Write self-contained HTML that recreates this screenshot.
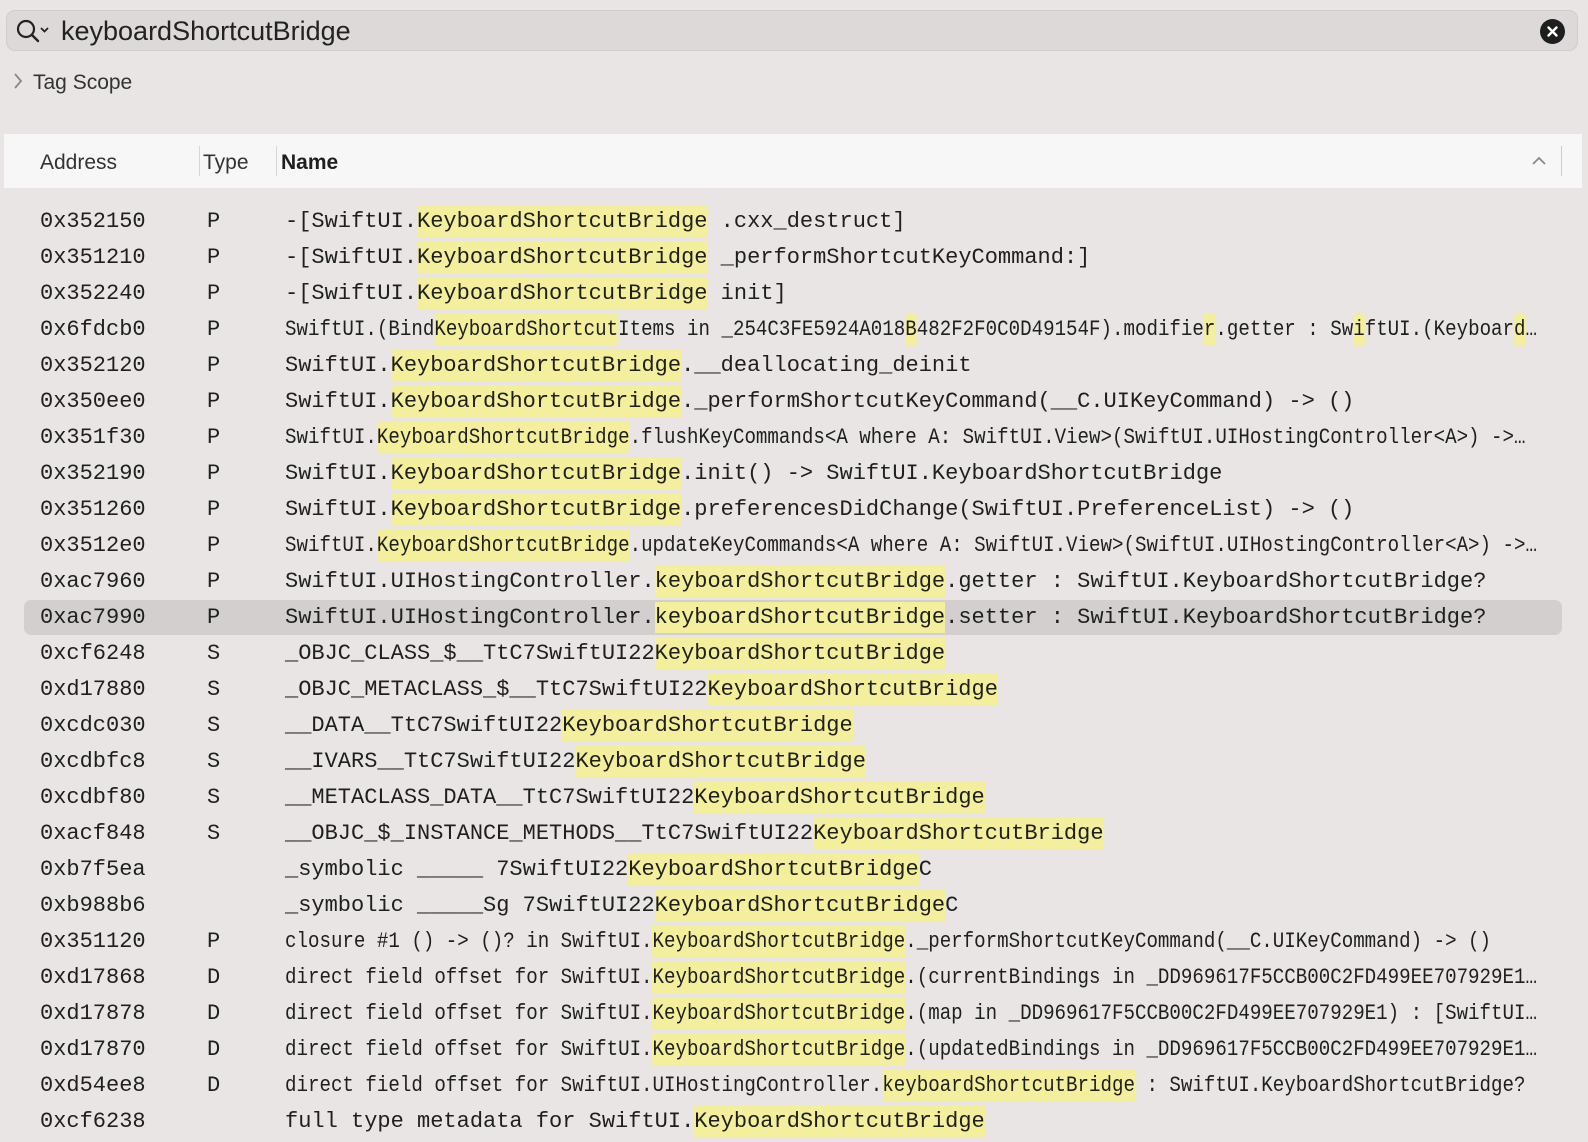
<!DOCTYPE html>
<html><head><meta charset="utf-8"><style>
*{margin:0;padding:0;box-sizing:border-box}
body{width:1588px;height:1142px;background:#e8e5e4;position:relative;overflow:hidden;font-family:"Liberation Sans",sans-serif;color:#1f1f1f}
.search{position:absolute;left:6px;top:10px;width:1572px;height:41px;background:#dcd9d8;border:1px solid #d0cdcc;border-radius:9px}
.search .q{position:absolute;left:54px;top:5px;font-size:27px;color:#222}
.close{position:absolute;left:1540px;top:19px;width:25px;height:25px;border-radius:50%;background:#1e1e1e}
.tag{position:absolute;left:33px;top:71px;font-size:21px;color:#333}
.hdr{position:absolute;left:4px;top:134px;width:1578px;height:54px;background:#f7f7f7}
.hdr span{position:absolute;top:17px;font-size:21px;color:#333}
.div{position:absolute;top:12px;width:1px;height:30px;background:#d6d6d6}
.row{position:absolute;left:0;width:1588px;height:36px;line-height:36px;font-family:"Liberation Mono",monospace;font-size:22px;white-space:nowrap}
.row .a{position:absolute;left:40px}
.row .t{position:absolute;left:207px}
.row .n{position:absolute;left:285px;transform-origin:0 50%}
.n.c{transform:scaleX(0.87)}
b{font-weight:normal;background:#f4ef9c;padding:3px 0}
.sel{position:absolute;left:24px;top:600px;width:1538px;height:35px;background:#d2cfce;border-radius:7px}
</style></head><body>
<div class="search">
<svg style="position:absolute;left:8px;top:7px" width="40" height="26" viewBox="0 0 40 26"><circle cx="11" cy="11" r="8" fill="none" stroke="#222" stroke-width="2.2"/><line x1="17" y1="17" x2="23" y2="23" stroke="#222" stroke-width="2.4" stroke-linecap="round"/><polyline points="26,10 29.5,13.5 33,10" fill="none" stroke="#222" stroke-width="1.8"/></svg>
<div class="q">keyboardShortcutBridge</div>
</div>
<div class="close"><svg width="25" height="25" viewBox="0 0 25 25"><path d="M8.5 8.5L16.5 16.5M16.5 8.5L8.5 16.5" stroke="#fff" stroke-width="2.4" stroke-linecap="round"/></svg></div>
<svg style="position:absolute;left:12px;top:72px" width="12" height="18" viewBox="0 0 12 18"><polyline points="3,2 9,9 3,16" fill="none" stroke="#888" stroke-width="1.8"/></svg>
<div class="tag">Tag Scope</div>
<div class="hdr">
<span style="left:36px">Address</span>
<div class="div" style="left:195px"></div>
<span style="left:199px">Type</span>
<div class="div" style="left:272px"></div>
<span style="left:277px;font-weight:bold;color:#1f1f1f">Name</span>
<svg style="position:absolute;left:1527px;top:21px" width="16" height="12" viewBox="0 0 16 12"><polyline points="2,9 8,3 14,9" fill="none" stroke="#888" stroke-width="1.8"/></svg>
<div class="div" style="left:1557px;background:#ccc"></div>
</div>
<div class="sel"></div>

<div class="row" style="top:204px"><span class="a">0x352150</span><span class="t">P</span><span class="n">-[SwiftUI.<b>KeyboardShortcutBridge</b> .cxx_destruct]</span></div>
<div class="row" style="top:240px"><span class="a">0x351210</span><span class="t">P</span><span class="n">-[SwiftUI.<b>KeyboardShortcutBridge</b> _performShortcutKeyCommand:]</span></div>
<div class="row" style="top:276px"><span class="a">0x352240</span><span class="t">P</span><span class="n">-[SwiftUI.<b>KeyboardShortcutBridge</b> init]</span></div>
<div class="row" style="top:312px"><span class="a">0x6fdcb0</span><span class="t">P</span><span class="n c">SwiftUI.(Bind<b>KeyboardShortcut</b>Items in _254C3FE5924A018<b>B</b>482F2F0C0D49154F).modifie<b>r</b>.getter : Sw<b>i</b>ftUI.(Keyboar<b>d</b>…</span></div>
<div class="row" style="top:348px"><span class="a">0x352120</span><span class="t">P</span><span class="n">SwiftUI.<b>KeyboardShortcutBridge</b>.__deallocating_deinit</span></div>
<div class="row" style="top:384px"><span class="a">0x350ee0</span><span class="t">P</span><span class="n">SwiftUI.<b>KeyboardShortcutBridge</b>._performShortcutKeyCommand(__C.UIKeyCommand) -&gt; ()</span></div>
<div class="row" style="top:420px"><span class="a">0x351f30</span><span class="t">P</span><span class="n c">SwiftUI.<b>KeyboardShortcutBridge</b>.flushKeyCommands&lt;A where A: SwiftUI.View&gt;(SwiftUI.UIHostingController&lt;A&gt;) -&gt;…</span></div>
<div class="row" style="top:456px"><span class="a">0x352190</span><span class="t">P</span><span class="n">SwiftUI.<b>KeyboardShortcutBridge</b>.init() -&gt; SwiftUI.KeyboardShortcutBridge</span></div>
<div class="row" style="top:492px"><span class="a">0x351260</span><span class="t">P</span><span class="n">SwiftUI.<b>KeyboardShortcutBridge</b>.preferencesDidChange(SwiftUI.PreferenceList) -&gt; ()</span></div>
<div class="row" style="top:528px"><span class="a">0x3512e0</span><span class="t">P</span><span class="n c">SwiftUI.<b>KeyboardShortcutBridge</b>.updateKeyCommands&lt;A where A: SwiftUI.View&gt;(SwiftUI.UIHostingController&lt;A&gt;) -&gt;…</span></div>
<div class="row" style="top:564px"><span class="a">0xac7960</span><span class="t">P</span><span class="n">SwiftUI.UIHostingController.<b>keyboardShortcutBridge</b>.getter : SwiftUI.KeyboardShortcutBridge?</span></div>
<div class="row" style="top:600px"><span class="a">0xac7990</span><span class="t">P</span><span class="n">SwiftUI.UIHostingController.<b>keyboardShortcutBridge</b>.setter : SwiftUI.KeyboardShortcutBridge?</span></div>
<div class="row" style="top:636px"><span class="a">0xcf6248</span><span class="t">S</span><span class="n">_OBJC_CLASS_$__TtC7SwiftUI22<b>KeyboardShortcutBridge</b></span></div>
<div class="row" style="top:672px"><span class="a">0xd17880</span><span class="t">S</span><span class="n">_OBJC_METACLASS_$__TtC7SwiftUI22<b>KeyboardShortcutBridge</b></span></div>
<div class="row" style="top:708px"><span class="a">0xcdc030</span><span class="t">S</span><span class="n">__DATA__TtC7SwiftUI22<b>KeyboardShortcutBridge</b></span></div>
<div class="row" style="top:744px"><span class="a">0xcdbfc8</span><span class="t">S</span><span class="n">__IVARS__TtC7SwiftUI22<b>KeyboardShortcutBridge</b></span></div>
<div class="row" style="top:780px"><span class="a">0xcdbf80</span><span class="t">S</span><span class="n">__METACLASS_DATA__TtC7SwiftUI22<b>KeyboardShortcutBridge</b></span></div>
<div class="row" style="top:816px"><span class="a">0xacf848</span><span class="t">S</span><span class="n">__OBJC_$_INSTANCE_METHODS__TtC7SwiftUI22<b>KeyboardShortcutBridge</b></span></div>
<div class="row" style="top:852px"><span class="a">0xb7f5ea</span><span class="t"></span><span class="n">_symbolic _____ 7SwiftUI22<b>KeyboardShortcutBridge</b>C</span></div>
<div class="row" style="top:888px"><span class="a">0xb988b6</span><span class="t"></span><span class="n">_symbolic _____Sg 7SwiftUI22<b>KeyboardShortcutBridge</b>C</span></div>
<div class="row" style="top:924px"><span class="a">0x351120</span><span class="t">P</span><span class="n c">closure #1 () -&gt; ()? in SwiftUI.<b>KeyboardShortcutBridge</b>._performShortcutKeyCommand(__C.UIKeyCommand) -&gt; ()</span></div>
<div class="row" style="top:960px"><span class="a">0xd17868</span><span class="t">D</span><span class="n c">direct field offset for SwiftUI.<b>KeyboardShortcutBridge</b>.(currentBindings in _DD969617F5CCB00C2FD499EE707929E1…</span></div>
<div class="row" style="top:996px"><span class="a">0xd17878</span><span class="t">D</span><span class="n c">direct field offset for SwiftUI.<b>KeyboardShortcutBridge</b>.(map in _DD969617F5CCB00C2FD499EE707929E1) : [SwiftUI…</span></div>
<div class="row" style="top:1032px"><span class="a">0xd17870</span><span class="t">D</span><span class="n c">direct field offset for SwiftUI.<b>KeyboardShortcutBridge</b>.(updatedBindings in _DD969617F5CCB00C2FD499EE707929E1…</span></div>
<div class="row" style="top:1068px"><span class="a">0xd54ee8</span><span class="t">D</span><span class="n c">direct field offset for SwiftUI.UIHostingController.<b>keyboardShortcutBridge</b> : SwiftUI.KeyboardShortcutBridge?</span></div>
<div class="row" style="top:1104px"><span class="a">0xcf6238</span><span class="t"></span><span class="n">full type metadata for SwiftUI.<b>KeyboardShortcutBridge</b></span></div>
</body></html>
